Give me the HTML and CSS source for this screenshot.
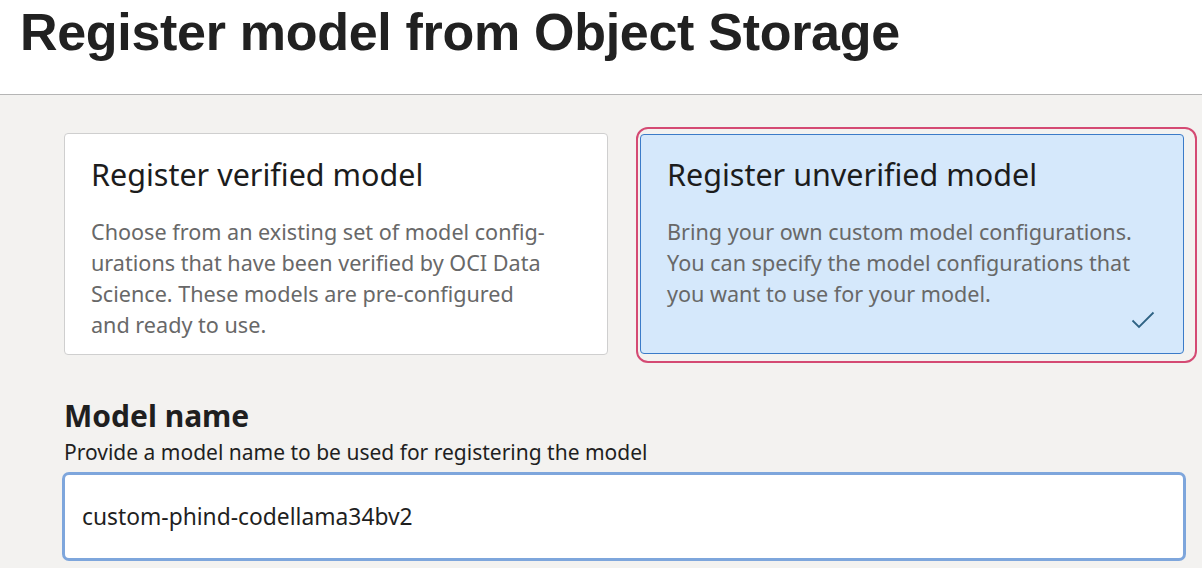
FILE: index.html
```html
<!DOCTYPE html>
<html lang="en">
<head>
<meta charset="utf-8">
<link rel="stylesheet" href="styles.css">
</head>
<body>
<header class="page-header">
  <h1 class="page-title">Register model from Object Storage</h1>
</header>
<main class="content">
  <div class="cards">
    <div class="card">
      <h2 class="card-title">Register verified model</h2>
      <p class="card-desc">Choose from an existing set of model config&shy;urations that have been verified by OCI Data Science. These models are pre-configured and ready to use.</p>
    </div>
    <div class="card card-selected">
      <h2 class="card-title">Register unverified model</h2>
      <p class="card-desc">Bring your own custom model configurations. You can specify the model configurations that you want to use for your model.</p>
      <svg class="check" viewBox="0 0 24 18" width="24" height="18" aria-hidden="true"><path d="M1.5 9.5 L8 16 L22.5 1.5" fill="none" stroke="#2f6384" stroke-width="1.8"/></svg>
    </div>
  </div>
  <section class="field">
    <h3 class="field-label">Model name</h3>
    <p class="field-help">Provide a model name to be used for registering the model</p>
    <div class="input">custom-phind-codellama34bv2</div>
  </section>
</main>
</body>
</html>
```
FILE: styles.css
```css
* { box-sizing: border-box; }
html, body { margin: 0; padding: 0; }
body {
  background: #f3f2f0;
  font-family: "Noto Sans", "Open Sans", sans-serif;
  color: #1f1f1f;
  width: 1202px;
  height: 568px;
  overflow: hidden;
}
.page-header {
  background: #fff;
  height: 95px;
  border-bottom: 1px solid #b5b5b5;
  padding: 3px 0 0 20px;
}
.page-title {
  margin: 0;
  font-family: "Liberation Sans", Arial, sans-serif;
  font-weight: 700;
  font-size: 52px;
  line-height: 58px;
  color: #212121;
  letter-spacing: -0.3px;
}
.content {
  padding: 38px 0 0 64px;
}
.cards {
  display: flex;
  gap: 32px;
}
.card {
  position: relative;
  width: 544px;
  height: 222px;
  background: #fff;
  border: 1px solid #cfcfcf;
  border-radius: 4px;
  padding: 20px 26px 0 26px;
}
.card-selected {
  background: #d5e8fb;
  border-color: #3b7bc8;
  height: 220px;
  margin-top: 1px;
  padding-top: 19px;
}
.card-selected::after {
  content: "";
  position: absolute;
  left: -5px;
  right: -14px;
  top: -8px;
  bottom: -10px;
  border: 2px solid #d44a73;
  border-radius: 12px;
}
.card-title {
  margin: 0;
  font-weight: 400;
  font-size: 30.5px;
  line-height: 40px;
  color: #1c1c1c;
}
.card-desc {
  margin: 22px 0 0 0;
  max-width: 464px;
  font-size: 21.6px;
  line-height: 31px;
  color: #686868;
}
.card-selected .card-desc {
  max-width: 482px;
}
.check {
  position: absolute;
  right: 28px;
  bottom: 24px;
}
.field {
  padding-top: 43px;
  width: 1122px;
}
.field-label {
  margin: 0;
  font-weight: 700;
  font-size: 30px;
  line-height: 36px;
  color: #1f1f1f;
}
.field-help {
  margin: 4px 0 6px 0;
  font-size: 21px;
  line-height: 28px;
  color: #1f1f1f;
}
.input {
  margin-left: -2px;
  height: 89px;
  background: #fff;
  border: 3px solid #7ea6dc;
  border-radius: 7px;
  padding: 0 17px;
  display: flex;
  align-items: center;
  font-size: 22.8px;
  color: #1f1f1f;
}
```
